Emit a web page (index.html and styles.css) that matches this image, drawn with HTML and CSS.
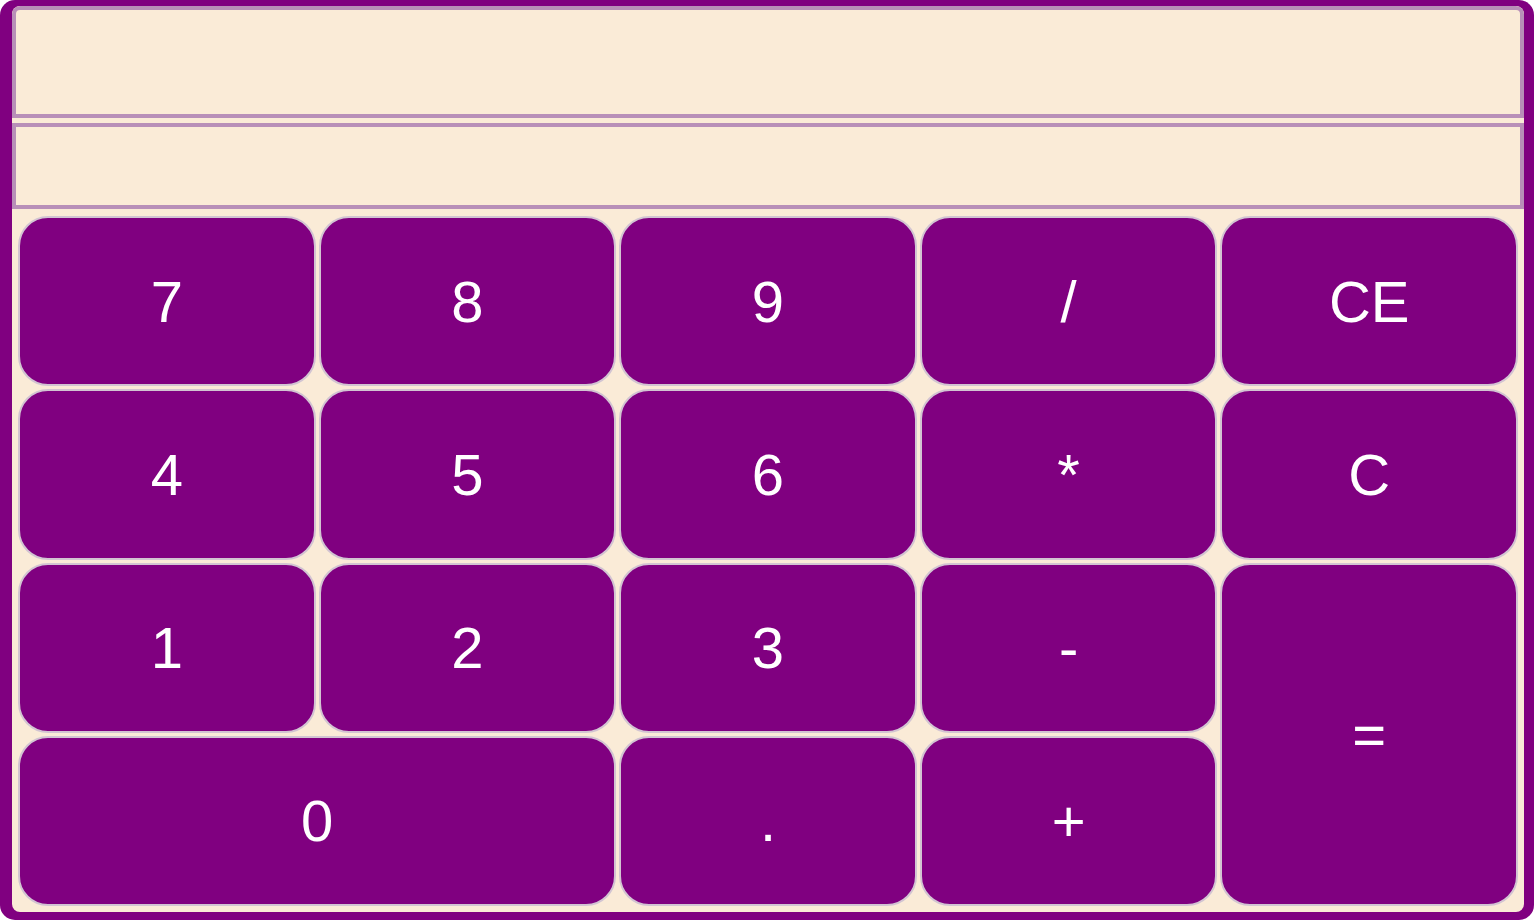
FILE: index.html
```html
<!DOCTYPE html>
<html>
<head>
<meta charset="utf-8">
<title>Calculator</title>
<link rel="stylesheet" href="styles.css">
</head>
<body>
<div class="frame">
  <div class="calc">
    <div class="display display-main"></div>
    <div class="display display-sub"></div>
    <div class="keys">
      <button class="key">7</button>
      <button class="key">8</button>
      <button class="key">9</button>
      <button class="key">/</button>
      <button class="key">CE</button>
      <button class="key">4</button>
      <button class="key">5</button>
      <button class="key">6</button>
      <button class="key">*</button>
      <button class="key">C</button>
      <button class="key">1</button>
      <button class="key">2</button>
      <button class="key">3</button>
      <button class="key">-</button>
      <button class="key key-eq">=</button>
      <button class="key key-zero">0</button>
      <button class="key">.</button>
      <button class="key">+</button>
    </div>
  </div>
</div>
</body>
</html>
```
FILE: styles.css
```css
html, body {
  margin: 0;
  padding: 0;
  background: #ffffff;
}

.frame {
  box-sizing: border-box;
  width: 1534px;
  height: 920px;
  background: #800080;
  border-radius: 15px;
  padding: 6px 10px 8px 12px;
  display: flex;
}

.calc {
  flex: 1;
  background: #faebd7;
  border-radius: 8px;
  display: flex;
  flex-direction: column;
  overflow: hidden;
}

.display {
  box-sizing: border-box;
  border: 4px solid #b88fb8;
  background: #faebd7;
}

.display-main {
  height: 112px;
  border-radius: 8px 8px 0 0;
}

.display-sub {
  height: 86px;
  margin-top: 5px;
}

.keys {
  flex: 1;
  display: grid;
  grid-template-columns: repeat(5, 1fr);
  grid-template-rows: repeat(4, 1fr);
  gap: 3px;
  padding: 7px 6px 6px 6px;
}

.key {
  background: #800080;
  color: #ffffff;
  border: 2px solid #d2c4d2;
  border-radius: 30px;
  font-family: "Liberation Sans", Arial, sans-serif;
  font-size: 58px;
  padding: 0;
  margin: 0;
}

.key-eq {
  grid-row: span 2;
}

.key-zero {
  grid-column: span 2;
}
```
